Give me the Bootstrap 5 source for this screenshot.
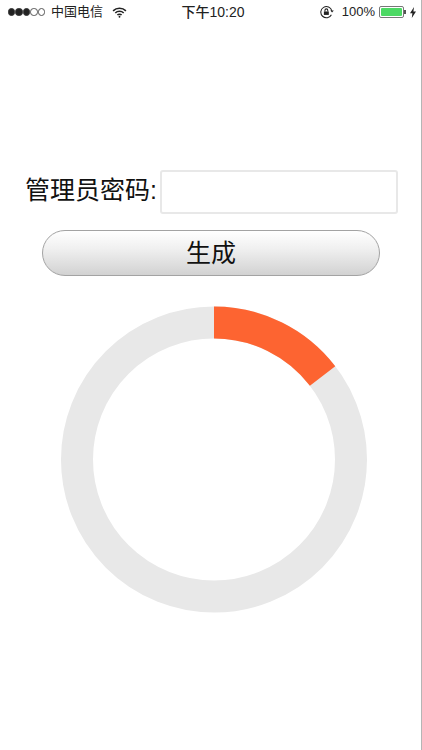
<!DOCTYPE html>
<html lang="zh">
<head>
  <meta charset="UTF-8" />
  <meta name="viewport" content="width=device-width, initial-scale=1.0"/>
  <title>管理员密码</title>
  <link href="https://cdn.jsdelivr.net/npm/bootstrap@5.3.0/dist/css/bootstrap.min.css" rel="stylesheet" />
  <style>
    html, body { height: 100%; }
    body {
      font-family: "Liberation Sans", "Noto Sans CJK SC", sans-serif;
      background: #fff;
      color: #111;
      overflow: hidden;
    }
    .phone-screen {
      width: 422px;
      height: 750px;
      border-right: 1px solid #b5b5b5;
    }
    .status-strip {
      height: 24px;
      padding: 0 5px 0 8px;
      font-size: 13px;
      line-height: 24px;
      color: #222;
    }
    .status-time { width: 74px; text-align: center; font-size: 14px; font-weight: 500; }
    .status-left { width: 168px; }
    .status-right { width: 166px; }
    .signal-dots { margin-right: 6px; }
    .signal-dot { width: 7.4px; height: 7.4px; border-radius: 50%; border: 1px solid #333; background: #222; }
    .signal-dot.off { background: #fff; border-color: #555; }
    .wifi-icon { margin-left: 9px; }
    .lock-icon { margin-right: 8px; }
    .battery-pct { margin-right: 4px; }
    .battery-shell {
      width: 25px; height: 12px; padding: 1px;
      border: 1px solid #777; border-radius: 2px;
    }
    .battery-fill { background: #4cd964; height: 100%; border-radius: 1px; }
    .battery-cap { width: 2px; height: 4px; background: #555; margin-right: 4px; }
    .pwd-row { margin-top: 146px; padding-left: 25px; }
    .pwd-label { font-size: 25px; line-height: 40px; padding-bottom: 4px; white-space: nowrap; width: 135px; }
    .pwd-input {
      width: 238px; height: 44px;
      border: 2px solid #e8e8e8; border-radius: 3px;
      background: #fff; outline: none;
    }
    .make-btn {
      display: block;
      width: 338px; height: 46px;
      margin: 16px 0 0 42px;
      padding: 0;
      font-size: 25px; line-height: 44px; color: #111;
      border: 1px solid #a3a3a3; border-radius: 23px;
      background: linear-gradient(#ffffff, #f0f0f0 40%, #d2d2d2);
    }
    .ring-wrap { margin: 30px 0 0 61px; width: 306px; height: 307px; }
    .ring-wrap svg { display: block; }
  </style>
</head>
<body>
  <div class="phone-screen">
    <!-- status bar -->
    <div class="status-strip d-flex justify-content-between align-items-center">
      <div class="status-left d-flex align-items-center">
        <div class="signal-dots d-flex">
          <span class="signal-dot"></span><span class="signal-dot"></span><span class="signal-dot"></span><span class="signal-dot off"></span><span class="signal-dot off"></span>
        </div>
        <span>中国电信</span>
        <svg class="wifi-icon" width="15" height="11" viewBox="0 0 16 12" fill="none" stroke="#222" stroke-width="1.7">
          <path d="M1 4.2a10 10 0 0 1 14 0"/>
          <path d="M3.4 6.6a6.6 6.6 0 0 1 9.2 0"/>
          <path d="M5.7 8.8a3.2 3.2 0 0 1 4.6 0"/>
          <circle cx="8" cy="10.6" r="1" fill="#222" stroke="none"/>
        </svg>
      </div>
      <div class="status-time">下午10:20</div>
      <div class="status-right d-flex align-items-center justify-content-end">
        <svg class="lock-icon" width="14" height="14" viewBox="0 0 13 13" fill="none" stroke="#222" stroke-width="1">
          <path d="M10.6 9a5.2 5.2 0 1 1 .4-3.6"/>
          <path d="M9.6 5.2h3.2l-1.6 1.7z" fill="#222" stroke="none"/>
          <rect x="3.6" y="6" width="4.6" height="3.2" fill="#222" stroke="none"/>
          <path d="M4.6 6V4.9a1.3 1.3 0 0 1 2.6 0V6"/>
        </svg>
        <span class="battery-pct">100%</span>
        <div class="battery-shell"><div class="battery-fill"></div></div>
        <span class="battery-cap"></span>
        <svg width="6" height="11" viewBox="0 0 6 11"><path d="M4 0 0 6.2h2.4L1.8 11 6 4.6H3.4z" fill="#222"/></svg>
      </div>
    </div>

    <div class="pwd-row d-flex align-items-center">
      <label class="pwd-label" for="pwd">管理员密码:</label>
      <input class="pwd-input" id="pwd" type="password">
    </div>
    <button class="make-btn" type="button">生成</button>

    <div class="ring-wrap">
      <svg width="306" height="307" viewBox="0 0 306 307">
        <circle cx="153" cy="153.5" r="137" fill="none" stroke="#e8e8e8" stroke-width="32"/>
        <circle cx="153" cy="153.5" r="137" fill="none" stroke="#fd6431" stroke-width="32"
          stroke-dasharray="125.3 735.5" transform="rotate(-90 153 153.5)"/>
      </svg>
    </div>
  </div>
  <script src="https://cdn.jsdelivr.net/npm/bootstrap@5.3.0/dist/js/bootstrap.bundle.min.js"></script>
</body>
</html>
